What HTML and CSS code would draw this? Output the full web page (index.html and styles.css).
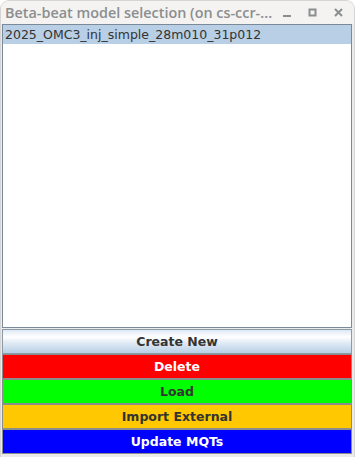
FILE: index.html
```html
<!DOCTYPE html>
<html>
<head>
<meta charset="utf-8">
<link rel="stylesheet" href="styles.css">
</head>
<body>
<div class="window">
  <div class="titlebar">
    <div class="title">Beta-beat model selection (on cs-ccr-...</div>
    <div class="controls">
      <svg class="ctl" width="12" height="12" viewBox="0 0 12 12"><rect x="2" y="8" width="8" height="2" fill="#8b8e8f"/></svg>
      <svg class="ctl" width="12" height="12" viewBox="0 0 12 12"><rect x="2.5" y="2.5" width="6" height="6" fill="none" stroke="#8b8e8f" stroke-width="2"/></svg>
      <svg class="ctl" width="12" height="12" viewBox="0 0 12 12"><path d="M2 2 L9 9 M9 2 L2 9" stroke="#8b8e8f" stroke-width="2" fill="none"/></svg>
    </div>
  </div>
  <div class="content">
    <div class="list">
      <div class="item selected">2025_OMC3_inj_simple_28m010_31p012</div>
    </div>
    <div class="buttons">
      <div class="btn create">Create New</div>
      <div class="btn delete">Delete</div>
      <div class="btn load">Load</div>
      <div class="btn import">Import External</div>
      <div class="btn update">Update MQTs</div>
    </div>
  </div>
</div>
</body>
</html>
```
FILE: styles.css
```css
html, body {
  margin: 0;
  padding: 0;
  background: #ffffff;
}
.window {
  width: 355px;
  height: 457px;
  box-sizing: border-box;
  background: #ebebea;
  border: 1px solid #d6d5d3;
  border-bottom: none;
  border-radius: 9px 9px 0 0;
  display: flex;
  flex-direction: column;
  overflow: hidden;
}
.titlebar {
  height: 23px;
  background: #f4f3f2;
  display: flex;
  align-items: center;
  padding: 0 0 0 4px;
  flex: none;
}
.title {
  font-family: "Open Sans", "DejaVu Sans", sans-serif;
  font-weight: 600;
  font-size: 14.4px;
  color: #8b8e8f;
  white-space: nowrap;
  flex: 1;
}
.controls {
  display: flex;
  gap: 14px;
  padding-right: 9px;
  align-items: center;
}
.ctl { display: block; }
.content {
  flex: 1;
  display: flex;
  flex-direction: column;
  padding: 0 2px 3px 1px;
}
.list {
  flex: 1;
  background: #ffffff;
  border: 1px solid #7a8a99;
  margin-bottom: 1px;
}
.item {
  height: 19px;
  line-height: 19px;
  padding-left: 2px;
  font-family: "DejaVu Sans", sans-serif;
  font-size: 12.5px;
  color: #333333;
  white-space: nowrap;
}
.selected {
  background: #b8cfe5;
}
.buttons {
  display: flex;
  flex-direction: column;
}
.btn {
  height: 23px;
  line-height: 23px;
  border: 1px solid #8a8c8e;
  text-align: center;
  font-family: "DejaVu Sans", sans-serif;
  font-weight: bold;
  font-size: 12.5px;
  color: #333333;
}
.create {
  border-color: #8a9aa9;
  background: linear-gradient(#dde8f3 0%, #ffffff 30%, #dde8f3 60%, #b8cfe5 100%);
}
.delete { background: #ff0000; color: #ffffff; }
.load { background: #00ff00; }
.import { background: #ffc800; }
.update { background: #0000ff; color: #ffffff; }
```
